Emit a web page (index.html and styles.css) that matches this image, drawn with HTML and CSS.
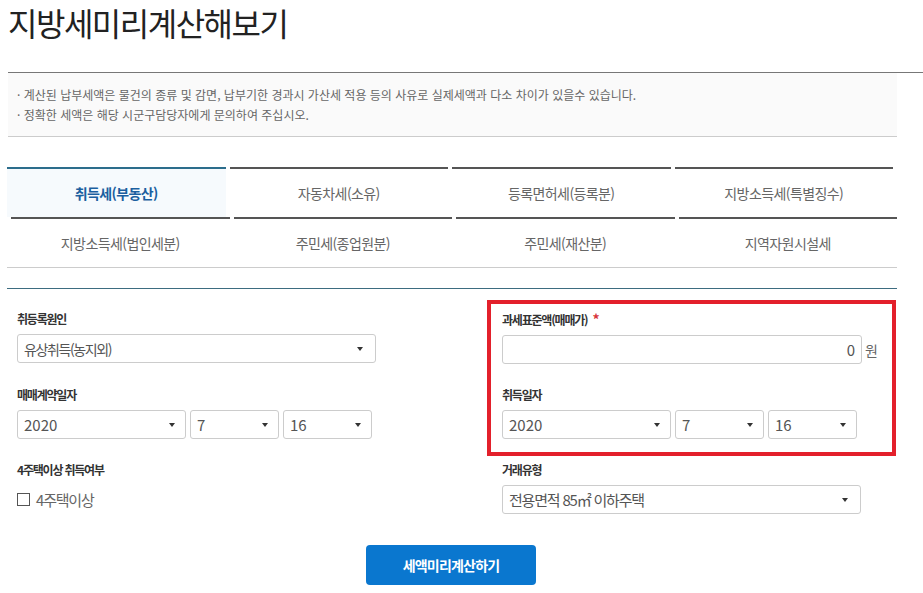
FILE: index.html
```html
<!DOCTYPE html>
<html lang="ko">
<head>
<meta charset="UTF-8">
<title>지방세미리계산해보기</title>
<link rel="stylesheet" href="styles.css">
</head>
<body>
    <div class="head">
        <h1 class="title">지방세미리계산해보기</h1>
    </div>
    <div class="notice">
        <p>· 계산된 납부세액은 물건의 종류 및 감면, 납부기한 경과시 가산세 적용 등의 사유로 실제세액과 다소 차이가 있을수 있습니다.</p>
        <p>· 정확한 세액은 해당 시군구담당자에게 문의하여 주십시오.</p>
    </div>

    <ul class="tabs">
        <li class="tab row1 on">취득세(부동산)</li>
        <li class="tab row1">자동차세(소유)</li>
        <li class="tab row1">등록면허세(등록분)</li>
        <li class="tab row1">지방소득세(특별징수)</li>
        <li class="tab row2">지방소득세(법인세분)</li>
        <li class="tab row2">주민세(종업원분)</li>
        <li class="tab row2">주민세(재산분)</li>
        <li class="tab row2">지역자원시설세</li>
    </ul>

    <div class="calc">
        <div class="fields">
            <div class="field">
                <div class="lbl">취등록원인</div>
                <div class="sel wide"><span class="ko small">유상취득(농지외)</span></div>
            </div>
            <div class="field">
                <div class="lbl">과세표준액(매매가) <span class="req">*</span></div>
                <div class="amount">
                    <div class="inp">0</div>
                    <span class="unit">원</span>
                </div>
            </div>
            <div class="field">
                <div class="lbl">매매계약일자</div>
                <div class="dates">
                    <div class="sel y">2020</div>
                    <div class="sel m">7</div>
                    <div class="sel m">16</div>
                </div>
            </div>
            <div class="field">
                <div class="lbl">취득일자</div>
                <div class="dates">
                    <div class="sel y">2020</div>
                    <div class="sel m">7</div>
                    <div class="sel m">16</div>
                </div>
            </div>
            <div class="field">
                <div class="lbl">4주택이상 취득여부</div>
                <label class="chk"><span class="box"></span><span class="ko">4주택이상</span></label>
            </div>
            <div class="field">
                <div class="lbl">거래유형</div>
                <div class="sel wide"><span class="ko">전용면적 85㎡ 이하주택</span></div>
            </div>
        </div>
        <div class="actions">
            <button class="btn">세액미리계산하기</button>
        </div>
        <div class="mark"></div>
    </div>
</body>
</html>
```

FILE: styles.css
```css
body {
    margin: 0px; padding: 0px; background-color: #fff; color: #333;
    font-family: "Noto Sans CJK KR", "Noto Sans", sans-serif;
}
p, ul, h1 { margin: 0px; padding: 0px; }

.head {
    margin-left: 8px;
    height: 72px;
    border-bottom: 1px solid #777;
}
.title {
    font-size: 32px;
    font-weight: normal;
    line-height: 44px;
    letter-spacing: -1.5px;
    color: #222;
}

.notice {
    margin-left: 8px;
    width: 889px;
    box-sizing: border-box;
    padding: 12px 9px 11px;
    background-color: #fafafa;
    border-bottom: 1px solid #ccc;
    font-size: 12px;
    line-height: 20px;
    color: #666;
}

.tabs {
    list-style: none;
    margin: 30px 0px 0px 7px;
    width: 890px;
    display: grid;
    grid-template-columns: repeat(4, 1fr);
    border-bottom: 1px solid #ccc;
}
.tab {
    height: 50px;
    box-sizing: border-box;
    border-top: 2px solid #555;
    line-height: 48px;
    text-align: center;
    font-size: 14px;
    letter-spacing: -0.6px;
    color: #666;
}
.tab.row1 { margin-right: 4px; }
.tab.row2 { margin-left: 4px; }
.tab.on {
    border-top-color: #2c6d8c;
    background-color: #f6fafd;
    color: #1b5fa0;
    font-weight: bold;
}

.calc {
    position: relative;
    margin: 20px 0px 0px 7px;
    width: 890px;
    box-sizing: border-box;
    border-top: 1px solid #3d6c80;
    padding: 22px 0px 0px 10px;
}
.fields {
    display: grid;
    grid-template-columns: 485px 1fr;
    row-gap: 23px;
}
.lbl {
    font-size: 12px;
    font-weight: bold;
    line-height: 16px;
    letter-spacing: -1.2px;
    color: #333;
    margin-bottom: 7px;
}
.req { color: #d8343a; font-size: 14px; margin-left: 3px; letter-spacing: 0px; }

.sel, .inp {
    position: relative;
    height: 29px;
    box-sizing: border-box;
    border: 1px solid #ccc;
    border-radius: 3px;
    padding: 0px 6px;
    font-size: 15px;
    line-height: 27px;
    color: #555;
    background-color: #fff;
}
.sel::after {
    content: "";
    position: absolute;
    right: 10px;
    top: 12px;
    border-left: 3px solid transparent;
    border-right: 3px solid transparent;
    border-top: 4px solid #333;
}
.sel.wide { width: 359px; }
.sel.wide::after { right: 12px; }
.sel.y { width: 169px; }
.sel.m { width: 89px; }
.ko { letter-spacing: -1.2px; }
.ko.small { font-size: 14px; letter-spacing: -1.4px; }

.dates { display: flex; gap: 4px; }

.amount { display: flex; align-items: center; }
.inp { width: 360px; text-align: right; }
.unit { font-size: 14px; color: #666; margin-left: 3px; }

.chk {
    display: flex;
    align-items: center;
    height: 29px;
    font-size: 15px;
    color: #666;
}
.chk .box {
    width: 13px;
    height: 13px;
    box-sizing: border-box;
    border: 1px solid #555;
    margin-right: 6px;
}

.actions {
    margin: 31px 0px 0px -10px;
    display: flex;
    justify-content: center;
}
.btn {
    width: 170px;
    height: 40px;
    border: 0px;
    border-radius: 4px;
    background-color: #0a77cf;
    color: #fff;
    font-family: "Noto Sans CJK KR", "Noto Sans", sans-serif;
    font-size: 14px;
    font-weight: bold;
    letter-spacing: -0.8px;
    margin-left: -2px;
}

/* highlight box drawn over the amount and date fields */
.mark {
    position: absolute;
    left: 480px;
    top: 11px;
    width: 409px;
    height: 156px;
    box-sizing: border-box;
    border: 4px solid #e3202b;
    pointer-events: none;
}
```
